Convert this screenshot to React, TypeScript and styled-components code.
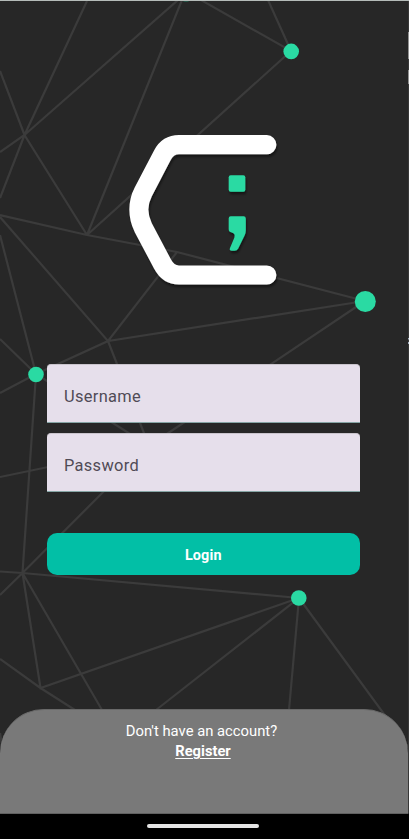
import React from "react";
import styled, { createGlobalStyle } from "styled-components";

const GlobalStyle = createGlobalStyle`
  *, *::before, *::after { box-sizing: border-box; }
  body { margin: 0; background: #272727; font-family: Roboto, sans-serif; }
`;

const Screen = styled.main`
  position: relative;
  isolation: isolate;
  width: 409px;
  height: 839px;
  overflow: hidden;
  display: flex;
  flex-direction: column;
  background: #272727;
  border-top: 1px solid #b5bcb9;
`;

const Network = styled.svg`
  position: absolute;
  left: 0;
  top: -1px;
  z-index: -1;
`;

const LogoArea = styled.header`
  height: 363px;
  padding: 124px 0 0 119px;
`;

const LogoMark = styled.svg`
  display: block;
  overflow: visible;
`;

const Form = styled.form`
  display: flex;
  flex-direction: column;
  width: 312.6px;
  margin-left: 47px;
  gap: 10px;
`;

const Field = styled.input`
  height: 59px;
  width: 100%;
  padding: 5px 17px 0;
  border: 0;
  border-top: 1px solid #c9c4cc;
  border-bottom: 1px solid #86a5a5;
  border-radius: 4px 4px 0 0;
  outline: 0;
  background: #e6dfeb;
  color: #49454f;
  font: 400 16.4px Roboto, sans-serif;
  letter-spacing: 0.33px;
  &::placeholder { color: #504b56; opacity: 1; }
`;

const LoginButton = styled.button`
  height: 42px;
  margin-top: 31px;
  padding: 2px 0 0;
  border: 0;
  border-radius: 10px;
  background: #02bfa6;
  color: #fff;
  font: 700 14.4px Roboto, sans-serif;
  letter-spacing: 0.15px;
`;

const Footer = styled.footer`
  height: 105px;
  margin-top: auto;
  width: 408px;
  padding-top: 12px;
  padding-right: 5px;
  border-radius: 44px 44px 0 0;
  background: #797979;
  border-top: 1px solid #696969;
  border-bottom: 1px solid #606060;
  color: #fff;
  font-size: 14.8px;
  line-height: 19px;
  text-align: center;
`;

const Prompt = styled.p`
  margin: 0;
`;

const RegisterLink = styled.a`
  display: block;
  width: fit-content;
  margin: 1px auto 0;
  padding-left: 3px;
  color: #fff;
  font-size: 14.7px;
  font-weight: 700;
  text-decoration: underline;
  text-decoration-thickness: 1px;
  text-underline-offset: 2px;
`;

const NavigationBar = styled.div`
  height: 25px;
  display: flex;
  padding: 10px 0 0 147px;
  background: #000;
`;

const HomeIndicator = styled.div`
  width: 112px;
  height: 4px;
  border-radius: 2px;
  background: #e5e5e5;
`;

const links = [
  "M87 1L24.5 135L0 198", "M178 0L24.5 135L0 152", "M0 71L24.5 135L87 235",
  "M182 0L87 235L291 51", "M201 0L291 51L268 0",
  "M0 215L87 235L177 252L365 301L108 341L177 252",
  "M0 217L108 341L36 374L0 393", "M0 235L36 374L0 339",
  "M108 341L149 446L365 301", "M36 374L149 446L0 477",
  "M149 446L22.5 573L36 374", "M0 571.5L22.5 573L299 598L40.5 688L22.5 573",
  "M0 595L22.5 573L102 710", "M0 659L40.5 688L75 710",
  "M156 710L299 598L289 710", "M299 598L409 748", "M0 733L3 751",
];

const nodes = [
  { x: 291.2, y: 51.4, r: 7.8 },
  { x: 365.3, y: 301.5, r: 10.5 },
  { x: 36, y: 374.5, r: 7.8 },
  { x: 298.8, y: 598, r: 7.8 },
];

function Background() {
  return (
    <Network width="409" height="839" viewBox="0 0 409 839" aria-hidden="true">
      <path d={links.join(" ")} fill="none" stroke="#3b3b3b" strokeWidth="2.2" />
      {nodes.map((node) => (
        <circle key={node.x} cx={node.x} cy={node.y} r={node.r} fill="#2adaa3" />
      ))}
      <ellipse cx="186" cy="1" rx="3" ry="1" fill="#245547" />
      <path d="M408.5 1V813" stroke="#383838" />
      <path d="M408.5 32V59M408.5 70V84" stroke="#929292" />
      <path d="M408.5 338V339.5M408.5 342V344" stroke="#a6b2c2" />
    </Network>
  );
}

function Logo() {
  return (
    <LogoMark width="160" height="170" viewBox="119 125 160 170" role="img" aria-label="Code logo">
      <defs>
        <filter id="logo-shadow" x="-15%" y="-15%" width="130%" height="135%">
          <feDropShadow dx="1" dy="2.5" stdDeviation="1.3" floodColor="#000" floodOpacity="0.48" />
        </filter>
      </defs>
      <g filter="url(#logo-shadow)">
        <path
          d="M266.8 144.7H179C171 144.7 166 148.5 162.5 155L143.2 192C137.5 203 137.5 216 143.2 227.5L162.5 264C166 270.5 171 275 179 275H266.8"
          fill="none" stroke="#fff" strokeWidth="19.2" strokeLinecap="round"
        />
        <rect x="228.7" y="175.3" width="16.6" height="16.4" rx="2" fill="#2adaa3" />
        <path
          d="M230.7 216.2H243.6Q245.8 216.2 245.8 218.4V230.5Q245.8 233 244.7 235.3L238.2 248.5Q237 250.8 234.5 250.8H231.8Q228.9 250.8 230 248.1L234.4 237.4Q235.6 233.4 231.8 232.5Q228.7 232 228.7 229.3V218.2Q228.7 216.2 230.7 216.2Z"
          fill="#2adaa3"
        />
      </g>
    </LogoMark>
  );
}

export default function App() {
  return (
    <>
      <GlobalStyle />
      <Screen>
        <Background />
        <LogoArea><Logo /></LogoArea>
        <Form onSubmit={(event) => event.preventDefault()}>
          <Field placeholder="Username" aria-label="Username" />
          <Field type="password" placeholder="Password" aria-label="Password" />
          <LoginButton type="submit">Login</LoginButton>
        </Form>
        <Footer>
          <Prompt>Don't have an account?</Prompt>
          <RegisterLink href="#register">Register</RegisterLink>
        </Footer>
        <NavigationBar><HomeIndicator /></NavigationBar>
      </Screen>
    </>
  );
}
